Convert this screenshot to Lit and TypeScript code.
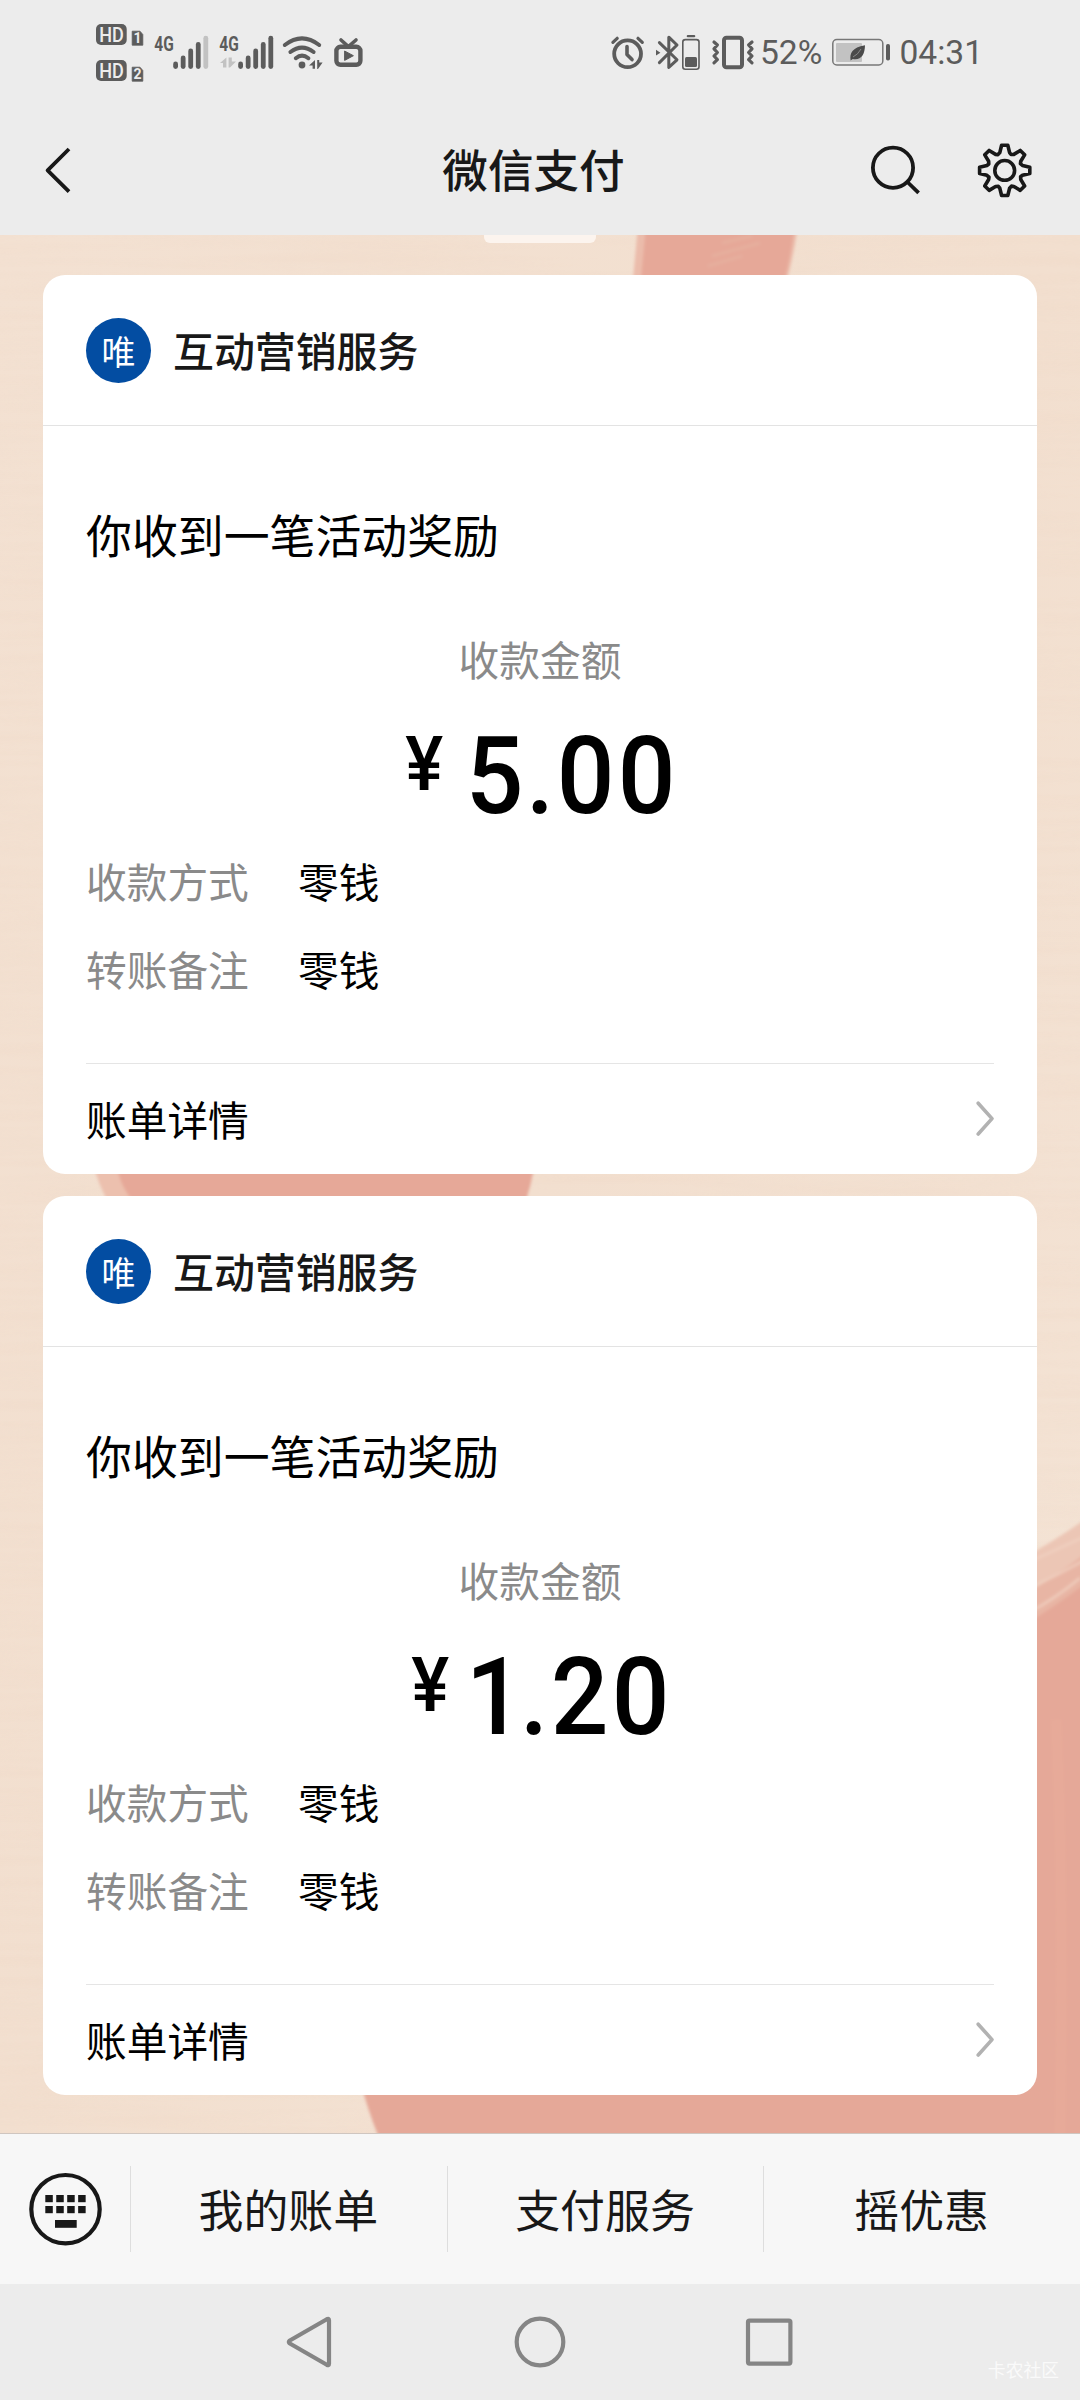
import { LitElement, html, svg, css } from "lit";
import { customElement, property } from "lit/decorators.js";
import { classMap } from "lit/directives/class-map.js";

const GREY = "#5c5c5c";
const FAINT = "#c2c2c2";

/** Closed outline of an eight-toothed cog centred on the origin. */
function cogPath(): string {
  const pts: string[] = [];
  const tooth: [number, number][] = [[-4.9, -17.8], [-3.1, -25.1], [3.1, -25.1], [4.9, -17.8]];
  for (let i = 0; i < 8; i++) {
    const a = (i * Math.PI) / 4;
    const rot = ([x, y]: [number, number]) =>
      `${(x * Math.cos(a) - y * Math.sin(a)).toFixed(2)} ${(x * Math.sin(a) + y * Math.cos(a)).toFixed(2)}`;
    tooth.forEach((p) => pts.push(rot(p)));
    pts.push(rot([6.35, -15.9]));
  }
  return `M${pts.join("L")}Z`;
}

@customElement("status-bar")
class StatusBar extends LitElement {
  static styles = css`
    :host { display: flex; height: 104px; padding: 0 94px 0 95px; color: #5c5c5c; font-family: Roboto, "Liberation Sans", sans-serif; }
    svg { display: block; height: 104px; flex: none; }
    .spacer { flex: 1; }
    .label { box-sizing: border-box; font-size: 33.6px; line-height: 106px; white-space: nowrap; }
    .percent { width: 70px; padding-left: 3px; }
    .clock { width: 91px; padding-left: 4.5px; }
  `;

  private hd(y: number, n: string) {
    return svg`
      <rect x="96" y=${y} width="30.7" height="21" rx="5" fill=${GREY} />
      <text x="99.3" y=${y + 17.6} font-size="20.5" font-weight="500" fill="#ececec" textLength="24.6" lengthAdjust="spacingAndGlyphs">HD</text>
      <path d="M132.2 ${y + 7.2}H140L142.8 ${y + 10.5}V${y + 21.2}H132.2Z" fill=${GREY} stroke=${GREY} stroke-width="0.8" stroke-linejoin="round" />
      <text x="137.4" y=${y + 19.2} font-size="14" font-weight="700" text-anchor="middle" fill="#ececec">${n}</text>`;
  }

  private bars(x: number, lit: number) {
    const tops = [64, 58, 51, 44.4, 38.2];
    return tops.map((t, i) => svg`<path d="M${x + i * 7.55} ${t}V66.6" stroke=${i < lit ? GREY : FAINT} stroke-width="4.8" stroke-linecap="round" />`);
  }

  render() {
    return html`
      <svg width="51" viewBox="95 0 51 104">${this.hd(24, "1")}${this.hd(60, "2")}</svg>
      <svg width="65" viewBox="146 0 65 104">
        <text x="154.3" y="51" font-size="21" font-weight="700" fill=${GREY} textLength="19.5" lengthAdjust="spacingAndGlyphs">4G</text>
        ${this.bars(175.6, 4)}
      </svg>
      <svg width="67" viewBox="211 0 67 104">
        <text x="219.3" y="51" font-size="21" font-weight="700" fill=${GREY} textLength="19.5" lengthAdjust="spacingAndGlyphs">4G</text>
        <path d="M226.4 57.6V67.4H223V63H220ZM228.6 57.6H231.8V61.6H236L230 67.6H228.6Z" fill=${FAINT} />
        ${this.bars(240.6, 5)}
      </svg>
      <svg width="50" viewBox="278 0 50 104">
        <g fill="none" stroke=${GREY} stroke-width="4" stroke-linecap="round">
          <path d="M284.8 45Q302 31.8 319.2 45" />
          <path d="M290.4 52Q302 43.2 313.6 52" />
          <path d="M295.8 58.2Q302 53 308.4 58.2" />
        </g>
        <circle cx="302" cy="65" r="3.4" fill=${GREY} />
        <path d="M315 60V68.8H312.6V65.6H309ZM317.2 60H319.2V62.4H322.6L318 69H317.2Z" fill=${GREY} />
      </svg>
      <svg width="40" viewBox="328 0 40 104">
        <rect x="336.4" y="46.8" width="24" height="18" rx="4" fill="none" stroke=${GREY} stroke-width="4.4" />
        <path d="M341 40L348.4 46.6L356 40" fill="none" stroke=${GREY} stroke-width="3.6" stroke-linecap="round" />
        <path d="M344.6 51V60.4L353.4 55.7Z" fill=${GREY} stroke=${GREY} stroke-linejoin="round" />
      </svg>
      <span class="spacer"></span>
      <svg width="44" viewBox="606 0 44 104">
        <g fill="none" stroke=${GREY} stroke-linecap="round" stroke-linejoin="round">
          <circle cx="627.6" cy="53.8" r="13.4" stroke-width="3.8" />
          <path d="M627 46.5V54.5L632 59.6" stroke-width="3.6" />
          <path d="M612.9 42.4L617.2 38.3M642.3 42.4L638 38.3" stroke-width="3.2" />
        </g>
      </svg>
      <svg width="55" viewBox="650 0 55 104">
        <path d="M659.4 42.6L677 59.8L668.8 67.4V37.2L677 45L659.4 62.6" fill="none" stroke=${GREY} stroke-width="3" stroke-linejoin="round" stroke-linecap="round" />
        <path d="M656 49.8V55.6L660.4 52.7Z" fill=${GREY} />
        <rect x="682.8" y="39.6" width="16.2" height="29.6" rx="2.5" fill="none" stroke=${GREY} stroke-width="1.6" />
        <rect x="685" y="57" width="12" height="10" rx="1.5" fill=${GREY} />
        <path d="M687.8 36.2H694.2" stroke=${GREY} stroke-width="2.2" stroke-linecap="round" />
      </svg>
      <svg width="52" viewBox="705 0 52 104">
        <rect x="724" y="37.8" width="18" height="29.4" rx="2.5" fill="none" stroke=${GREY} stroke-width="4" />
        <path d="M714 42L717.4 45L714 48.8L717.4 52.5L714 56L717.4 59.6L714 62.8M752 42L748.6 45L752 48.8L748.6 52.5L752 56L748.6 59.6L752 62.8" fill="none" stroke=${GREY} stroke-width="3.2" stroke-linejoin="round" stroke-linecap="round" />
      </svg>
      <span class="label percent">52%</span>
      <svg width="68" viewBox="827 0 68 104">
        <rect x="832.8" y="39.6" width="50" height="25.4" rx="4" fill="none" stroke="#777" stroke-width="1.5" />
        <rect x="836" y="43" width="26" height="19" rx="1" fill=${FAINT} />
        <path d="M850.6 60.4C849.6 53 852 47.6 865 45.2C864.8 54.6 861 60.6 852.8 59Q851.6 60 850.6 60.4Z" fill="#4a4a4a" />
        <path d="M853 57Q858 54.5 861 49" stroke="#999" stroke-width="0.8" fill="none" />
        <rect x="886" y="44" width="4" height="16.6" rx="1.8" fill=${GREY} />
      </svg>
      <span class="label clock">04:31</span>
    `;
  }
}

@customElement("title-bar")
class TitleBar extends LitElement {
  static styles = css`
    :host { display: grid; grid-template-columns: 240px 1fr 240px; height: 131px; align-items: start; }
    svg { display: block; height: 131px; }
    .title { text-align: center; font-size: 45.6px; font-weight: 500; line-height: 128px; color: #181818; padding-right: 13px; }
  `;

  render() {
    return html`
      <svg width="240" viewBox="0 104 240 131">
        <path d="M69 149L47.6 170.3L69 191.6" fill="none" stroke="#181818" stroke-width="3.8" stroke-linejoin="round" />
      </svg>
      <div class="title">微信支付</div>
      <svg width="240" viewBox="840 104 240 131">
        <g fill="none" stroke="#181818" stroke-width="3.8">
          <circle cx="893" cy="167.7" r="20.1" />
          <path d="M907.4 182L918.6 192.8" />
        </g>
        <g transform="translate(1004.7 170.4)" fill="none" stroke="#181818" stroke-width="3.6" stroke-linejoin="round">
          <path d=${cogPath()} />
          <circle r="9.9" />
        </g>
      </svg>
    `;
  }
}

@customElement("chat-wallpaper")
class ChatWallpaper extends LitElement {
  static styles = css`
    :host { display: block; }
    svg { display: block; width: 1080px; height: 1898px; }
  `;

  render() {
    return html`
      <svg viewBox="0 235 1080 1898">
        <defs>
          <linearGradient id="base" x1="0" y1="0" x2="1" y2="1">
            <stop offset="0" stop-color="#f3e1d2" />
            <stop offset="0.5" stop-color="#f2dfcf" />
            <stop offset="1" stop-color="#f4e4d6" />
          </linearGradient>
          <filter id="grain" x="0" y="0" width="100%" height="100%">
            <feTurbulence type="fractalNoise" baseFrequency="0.004 0.09" numOctaves="2" seed="4" />
            <feColorMatrix values="0 0 0 0 0.83  0 0 0 0 0.6  0 0 0 0 0.47  0.7 0 0 0 -0.25" />
          </filter>
          <filter id="soft"><feGaussianBlur stdDeviation="1.4" /></filter>
        </defs>
        <rect y="235" width="1080" height="1898" fill="url(#base)" />
        <rect y="235" width="1080" height="1898" filter="url(#grain)" opacity="0.32" />
        <g filter="url(#soft)">
          <path d="M638 225L632 290H784Q793 262 798 225Z" fill="#ebbcab" />
          <path d="M646 225L640 290H782Q790 262 795 225Z" fill="#e6a898" />
          <path d="M722 243L752 236M712 256L760 243M708 266L742 256" stroke="#e5b09f" stroke-width="2.4" fill="none" />
          <path d="M92 1160Q98 1185 110 1205H524Q531 1188 535 1160Z" fill="#ecc0ae" />
          <path d="M116 1160Q118 1185 136 1205H524Q531 1188 535 1160Z" fill="#e6a898" />
          <path d="M360 2080Q368 2112 382 2145H1090V1580Q1050 1600 1020 1640V2080Z" fill="#e5a898" />
          <path d="M1020 1560Q1056 1540 1090 1516V1600L1020 1650Z" fill="#ecc6b5" />
          <path d="M1020 1598Q1056 1576 1090 1550V1640L1020 1660Z" fill="#e8b5a4" />
          <path d="M1020 1628Q1056 1606 1090 1580V1660L1020 1700Z" fill="#e5a898" />
          <path d="M1020 1566Q1056 1550 1090 1534M1030 1588Q1060 1574 1090 1557M1030 1612Q1056 1598 1080 1578" stroke="#f0d2c2" stroke-width="2.4" fill="none" opacity="0.8" />
          <path d="M1056 1720Q1064 1880 1060 2140" stroke="#e7ab9a" stroke-width="10" fill="none" opacity="0.6" />
        </g>
      </svg>
    `;
  }
}

@customElement("payment-card")
class PaymentCard extends LitElement {
  @property() amount = "";
  @property({ attribute: false }) rows: [string, string][] = [];

  static styles = css`
    :host { display: flex; flex-direction: column; box-sizing: border-box; height: 899px; background: #fff; border-radius: 22px; color: #000; font-size: 40.7px; }
    .head { display: flex; align-items: center; gap: 22px; height: 151px; padding: 0 43px; border-bottom: 1.5px solid #e3e3e3; box-sizing: border-box; }
    .avatar { width: 65px; height: 65px; border-radius: 50%; background: #034da2; color: #fff; font-size: 34px; line-height: 65px; text-align: center; flex: none; }
    .name { font-weight: 500; color: #181818; line-height: 60px; font-size: 40.9px; }
    .body { padding: 0 43px; display: flex; flex-direction: column; flex: 1; }
    .message { font-size: 45.9px; line-height: 70px; margin-top: 72px; }
    .caption { text-align: center; color: #8a8a8a; line-height: 60px; margin-top: 61px; }
    .amount { display: flex; justify-content: center; align-items: flex-start; height: 128px; margin-top: 24px; font-family: Roboto, "Liberation Sans", sans-serif; font-weight: 500; }
    .cell { display: flex; justify-content: center; }
    .yen { font-size: 76px; line-height: 102px; width: 43px; margin-right: 18px; }
    .yen .glyph { transform: scaleX(0.94); }
    .digit { font-size: 108px; line-height: 127px; width: 61px; }
    .digit .glyph { transform: scaleX(0.94); }
    .one { width: 49px; }
    .dot { width: 30px; }
    .rows { display: flex; flex-direction: column; gap: 28px; margin-top: 10px; }
    .row { display: flex; line-height: 60px; }
    .key { width: 212px; color: #8a8a8a; }
    .foot { display: flex; align-items: center; justify-content: space-between; border-top: 1.5px solid #e5e5e5; height: 110px; margin-top: auto; line-height: 60px; }
    .chevron { display: block; width: 19px; height: 38px; }
  `;

  private digit(d: string) {
    return html`<span class=${classMap({ cell: true, digit: true, one: d === "1", dot: d === "." })}><span class="glyph">${d}</span></span>`;
  }

  render() {
    return html`
      <div class="head">
        <div class="avatar">唯</div>
        <div class="name">互动营销服务</div>
      </div>
      <div class="body">
        <div class="message">你收到一笔活动奖励</div>
        <div class="caption">收款金额</div>
        <div class="amount">
          <span class="cell yen"><span class="glyph">¥</span></span>
          ${[...this.amount].map((d) => this.digit(d))}
        </div>
        <div class="rows">
          ${this.rows.map(([k, v]) => html`<div class="row"><span class="key">${k}</span><span>${v}</span></div>`)}
        </div>
        <div class="foot">
          <span>账单详情</span>
          <svg class="chevron" viewBox="0 0 19 38"><path d="M3.2 3.2L17 18.6L3.2 34" fill="none" stroke="#b2b2b2" stroke-width="3.6" stroke-linejoin="round" stroke-linecap="round" /></svg>
        </div>
      </div>
    `;
  }
}

@customElement("menu-bar")
class MenuBar extends LitElement {
  static styles = css`
    :host { display: flex; box-sizing: border-box; height: 151px; background: #f7f7f7; border-top: 1.5px solid #cfc6c0; align-items: center; font-size: 44.9px; color: #181818; }
    .keyboard { display: block; width: 130px; height: 86px; flex: none; }
    .item { flex: 1; box-sizing: border-box; height: 86px; line-height: 85px; text-align: center; border-left: 1px solid #dedede; padding-right: 1px; }
  `;

  render() {
    return html`
      <svg class="keyboard" viewBox="0 2166 130 86">
        <circle cx="65.5" cy="2209.2" r="34.2" fill="none" stroke="#181818" stroke-width="4.2" />
        ${[0, 1, 2, 3].map((i) => svg`
          <rect x=${45.3 + i * 10.95} y="2195" width="7.5" height="7.2" fill="#181818" />
          <rect x=${45.3 + i * 10.95} y="2206" width="7.5" height="7.2" fill="#181818" />`)}
        <rect x="55" y="2220" width="21.7" height="7.8" fill="#181818" />
      </svg>
      ${["我的账单", "支付服务", "摇优惠"].map((t) => html`<div class="item">${t}</div>`)}
    `;
  }
}

@customElement("system-nav")
class SystemNav extends LitElement {
  static styles = css`
    :host { display: flex; position: relative; height: 116px; background: #ececec; justify-content: center; gap: 160px; align-items: center; }
    svg { display: block; width: 70px; height: 116px; fill: none; stroke: #858585; stroke-width: 4.2; }
    .mark { position: absolute; right: 21px; bottom: 17px; font-size: 17.8px; line-height: 28px; color: #fafafa; }
  `;

  render() {
    return html`
      <svg viewBox="275 2284 70 116"><path d="M289.4 2340.8Q288.4 2342 289.4 2343.2L326.8 2364.8Q329 2366 329 2363.8V2320.2Q329 2318 326.8 2319.2Z" stroke-linejoin="round" /></svg>
      <svg viewBox="505 2284 70 116"><circle cx="540" cy="2342" r="23.3" /></svg>
      <svg viewBox="735 2284 70 116"><rect x="748" y="2320.6" width="42.4" height="43" rx="1.5" /></svg>
      <span class="mark">卡农社区</span>
    `;
  }
}

@customElement("app-root")
class AppRoot extends LitElement {
  static styles = css`
    :host { display: flex; flex-direction: column; width: 1080px; height: 2400px; overflow: hidden; background: #ededed; font-family: "Noto Sans CJK SC", "Noto Sans", sans-serif; }
    .top { background: #ececec; }
    .chat { position: relative; flex: 1; overflow: hidden; display: flex; flex-direction: column; }
    .wallpaper { position: absolute; inset: 0; }
    .peek { position: relative; align-self: center; width: 112px; height: 8px; border-radius: 0 0 6px 6px; background: #fcf4ee; margin-bottom: 32px; }
    .cards { position: relative; display: flex; flex-direction: column; gap: 22px; padding: 0 43px; }
  `;

  private rows: [string, string][] = [["收款方式", "零钱"], ["转账备注", "零钱"]];

  render() {
    return html`
      <div class="top"><status-bar></status-bar><title-bar></title-bar></div>
      <div class="chat">
        <chat-wallpaper class="wallpaper"></chat-wallpaper>
        <div class="peek"></div>
        <div class="cards">
          ${["5.00", "1.20"].map((a) => html`<payment-card .amount=${a} .rows=${this.rows}></payment-card>`)}
        </div>
      </div>
      <menu-bar></menu-bar>
      <system-nav></system-nav>
    `;
  }
}
